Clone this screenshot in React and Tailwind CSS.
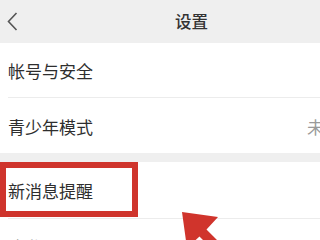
import React from "react";

// ── Settings list row ─────────────────────────────────────────────────────────
const Row = ({ label, value, divider = true, h = "h-[55px]" }) => (
  <div className={`${h} pl-[8px] flex flex-col`}>
    <div className="flex-1 flex items-center justify-between pt-[2px]">
      <span className="text-[17px] text-[#2e2e2e]">{label}</span>
      {value && <span className="text-[17px] text-[#9a9a9a] -mr-[4px]">{value}</span>}
    </div>
    {divider && <div className="h-px bg-[#ececec]" />}
  </div>
);

const App = () => (
  <div
    className="relative w-[320px] h-[240px] overflow-hidden bg-white"
    style={{ fontFamily: '"Noto Sans CJK SC", "Noto Sans", sans-serif' }}
  >
    {/* Header */}
    <div className="h-[43px] bg-[#efefef] flex items-center relative">
      <svg className="ml-[7px]" width="11" height="19" viewBox="0 0 11 19">
        <path d="M9.5 1 L1.5 9.5 L9.5 18" fill="none" stroke="#555" strokeWidth="1.6" />
      </svg>
      <span className="absolute left-[175px] top-[9px] text-[16.5px] font-medium text-[#333] leading-[24px]">
        设置
      </span>
    </div>

    {/* Group 1 */}
    <div className="bg-white">
      <Row label="帐号与安全" />
      <Row label="青少年模式" value="未" divider={false} />
    </div>

    <div className="h-[9px] bg-[#efefef]" />

    {/* Group 2 */}
    <div className="bg-white">
      <Row label="新消息提醒" h="h-[57px]" />
      <Row label="隐私" />
    </div>

    {/* Red highlight box */}
    <div className="absolute left-0 top-[162px] w-[138px] h-[55px] border-[6px] border-[#cf342c]" />

    {/* Red arrow */}
    <svg className="absolute inset-0 pointer-events-none" width="320" height="240" viewBox="0 0 320 240">
      <polygon
        points="182,212 218,217 206.5,229.5 265.5,288.5 258.5,295.5 199.5,236.5 187,248"
        fill="#d0342c"
      />
    </svg>
  </div>
);

export default App;
